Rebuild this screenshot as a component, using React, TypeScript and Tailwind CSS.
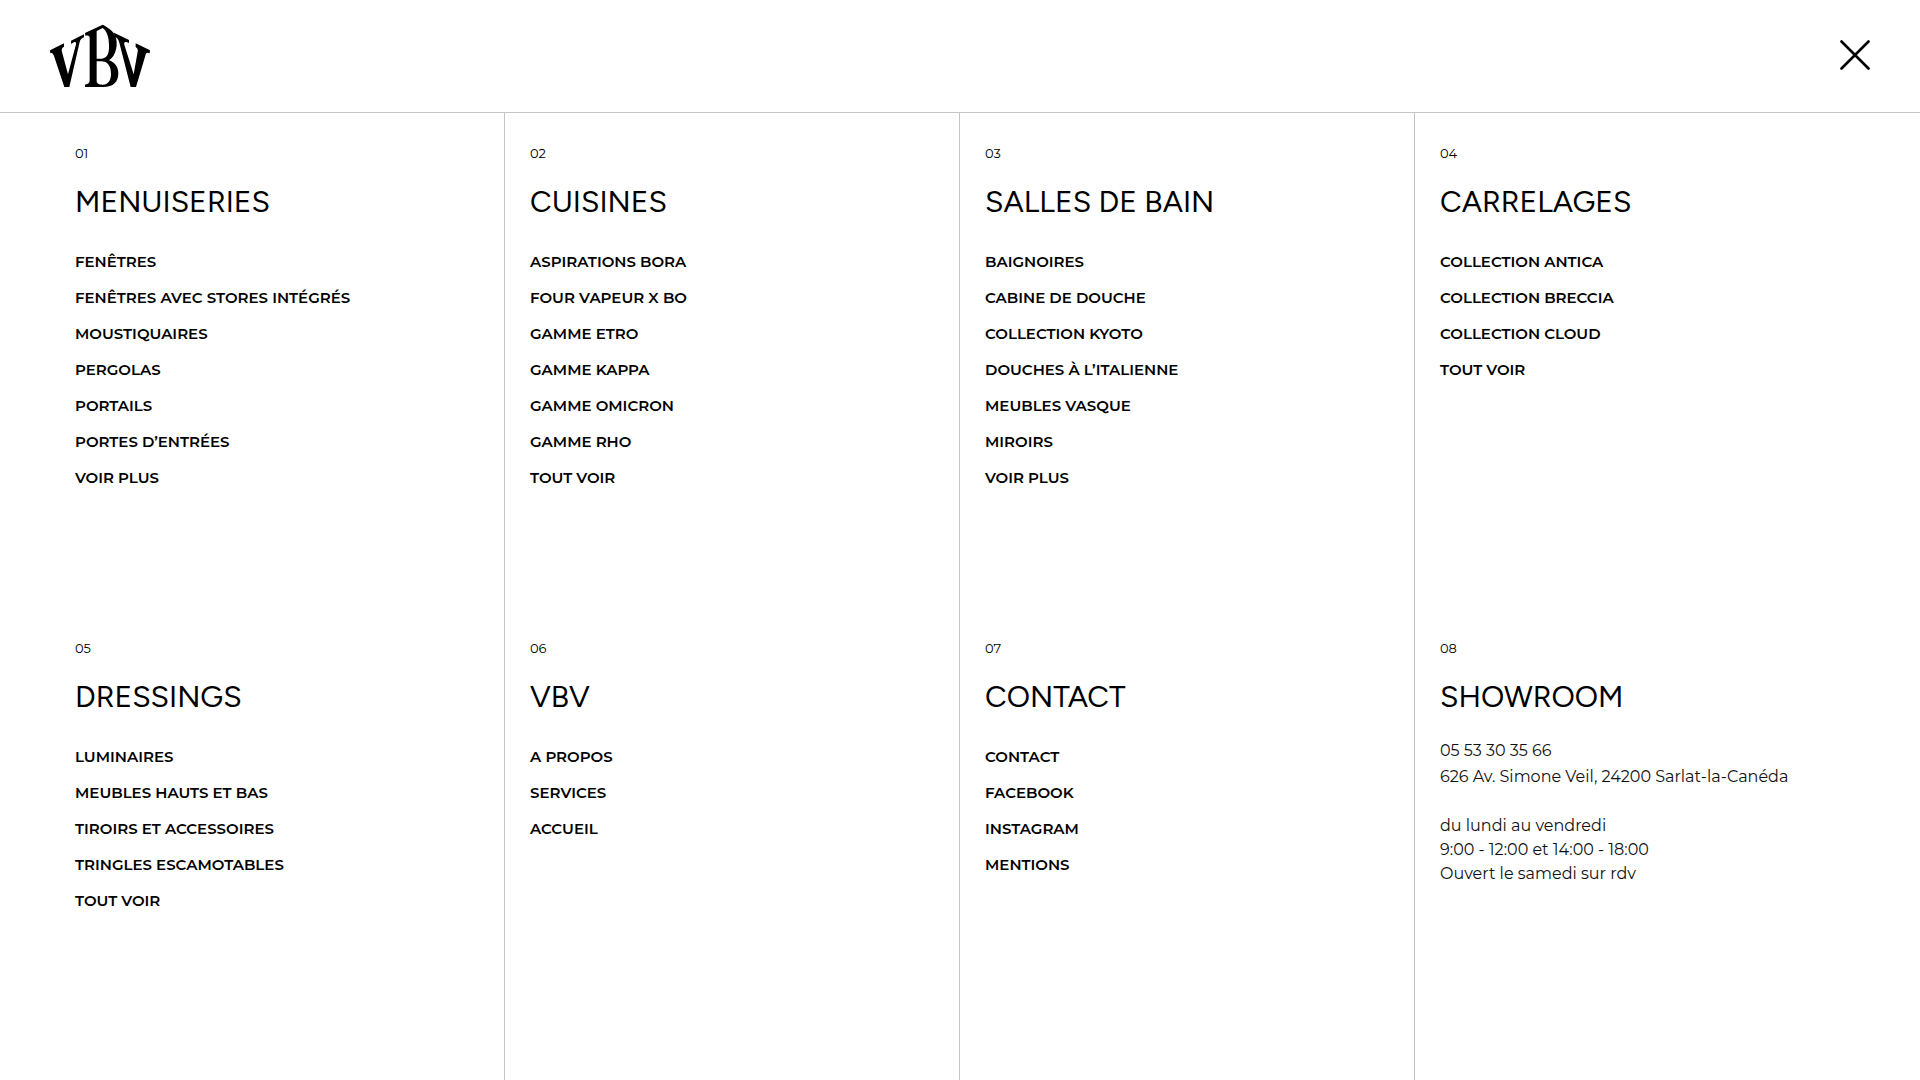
type Section = { title: string; links?: string[] };

const sections: Section[] = [
  {
    title: "MENUISERIES",
    links: ["FENÊTRES", "FENÊTRES AVEC STORES INTÉGRÉS", "MOUSTIQUAIRES", "PERGOLAS", "PORTAILS", "PORTES D’ENTRÉES", "VOIR PLUS"],
  },
  {
    title: "CUISINES",
    links: ["ASPIRATIONS BORA", "FOUR VAPEUR X BO", "GAMME ETRO", "GAMME KAPPA", "GAMME OMICRON", "GAMME RHO", "TOUT VOIR"],
  },
  {
    title: "SALLES DE BAIN",
    links: ["BAIGNOIRES", "CABINE DE DOUCHE", "COLLECTION KYOTO", "DOUCHES À L’ITALIENNE", "MEUBLES VASQUE", "MIROIRS", "VOIR PLUS"],
  },
  { title: "CARRELAGES", links: ["COLLECTION ANTICA", "COLLECTION BRECCIA", "COLLECTION CLOUD", "TOUT VOIR"] },
  {
    title: "DRESSINGS",
    links: ["LUMINAIRES", "MEUBLES HAUTS ET BAS", "TIROIRS ET ACCESSOIRES", "TRINGLES ESCAMOTABLES", "TOUT VOIR"],
  },
  { title: "VBV", links: ["A PROPOS", "SERVICES", "ACCUEIL"] },
  { title: "CONTACT", links: ["CONTACT", "FACEBOOK", "INSTAGRAM", "MENTIONS"] },
  { title: "SHOWROOM" },
];

function Logo() {
  return (
    <svg viewBox="30 27 300 189" className="h-[63px] w-[100px]" fill="#000" aria-hidden="true">
      <path d="M30 106 L72 85 L72 95 C65 99 64 103 66 111 L84 178 L108 88 C109 82 107 80 103 81 L93 87 L93 77 L132 58 L132 67 C125 70 121 74 119 81 L88 216 L73 216 L42 123 C39 115 36 112 31 115 Z" />
      <path
        fillRule="evenodd"
        d="M135 54 L188 29 C204 37 219 48 225 60 C236 84 229 123 207 136 C224 142 235 155 235 175 C235 201 220 216 190 216 L135 216 L135 209 C146 207 149 203 149 196 L149 69 C149 62 145 60 136 62 Z M170 48 L170 131 L185 131 C201 129 208 116 207 92 C207 67 201 49 188 39 Z M170 139 L170 198 C170 206 177 209 188 209 C204 209 213 196 213 176 C213 152 202 139 184 139 Z"
      />
      <path d="M222 53 L267 75 L267 84 C256 79 251 81 253 89 L281 178 L293 110 C294 103 293 100 287 96 L287 85 L330 106 L329 115 C320 111 318 114 316 122 L288 216 L272 216 L238 83 C235 72 231 67 224 65 Z" />
    </svg>
  );
}

function Showroom() {
  return (
    <address className="mt-[21px] text-[16px] not-italic text-[#111]">
      <a href="tel:+33553303566" className="block leading-[26px]">05 53 30 35 66</a>
      <p className="leading-[26px]">626 Av. Simone Veil, 24200 Sarlat-la-Canéda</p>
      <p className="mt-6 leading-6">
        du lundi au vendredi
        <br />
        9:00 - 12:00 et 14:00 - 18:00
        <br />
        Ouvert le samedi sur rdv
      </p>
    </address>
  );
}

export default function App() {
  return (
    <div className="flex min-h-screen flex-col bg-white font-['Montserrat','Inter',sans-serif] text-black">
      <header className="flex items-start justify-between border-b border-[#c4c4c4] px-[50px] pt-6 pb-[25px]">
        <a href="#accueil" aria-label="VBV">
          <Logo />
        </a>
        <button type="button" aria-label="Fermer le menu" className="mt-4 cursor-pointer">
          <svg viewBox="0 0 30 30" className="size-[30px]" stroke="#000" strokeWidth="2.6" strokeLinecap="round" aria-hidden="true">
            <path d="M1.5 1.5 L28.5 28.5 M28.5 1.5 L1.5 28.5" />
          </svg>
        </button>
      </header>
      <nav aria-label="Menu principal" className="grid flex-1 grid-cols-4 grid-rows-[auto_1fr] px-[50px]">
        {sections.map((section, i) => (
          <section
            key={section.title}
            className={`px-[25px] pt-[25px] ${i < 4 ? "pb-28" : "pb-10"} ${i % 4 < 3 ? "border-r border-[#c4c4c4]" : ""}`}
          >
            <p className="text-[13px] leading-[30px]">{`0${i + 1}`}</p>
            <h2 className="mt-3.5 font-['Figtree','Inter',sans-serif] text-[30px] leading-10">{section.title}</h2>
            {section.links ? (
              <ul className="mt-[22px]">
                {section.links.map((link) => (
                  <li key={link} className="text-[15px] leading-9 font-semibold">
                    <a href="#menu">{link}</a>
                  </li>
                ))}
              </ul>
            ) : (
              <Showroom />
            )}
          </section>
        ))}
      </nav>
    </div>
  );
}
